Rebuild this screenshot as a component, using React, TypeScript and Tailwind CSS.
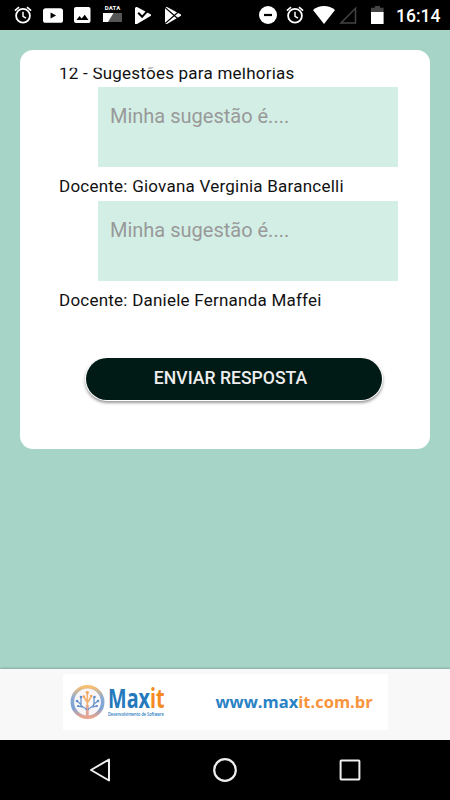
const docentes = ["Giovana Verginia Barancelli", "Daniele Fernanda Maffei"];

function AlarmIcon() {
  return (
    <svg width="18" height="18" viewBox="0 0 18 18" fill="none" stroke="#fff">
      <circle cx="9" cy="9.8" r="6.9" strokeWidth="1.8" />
      <path d="M9 5.8v4.5l3 1.9" strokeWidth="1.5" />
      <path d="M.9 4.6 5 1.2M17.1 4.6 13 1.2" strokeWidth="1.7" />
    </svg>
  );
}

function StatusBar() {
  return (
    <header className="flex h-[30px] items-center bg-black text-white">
      <div className="ml-[14px] flex">
        <AlarmIcon />
      </div>
      <svg className="ml-[11px]" width="20" height="15" viewBox="0 0 19 14">
        <rect width="19" height="14" rx="2.6" fill="#fff" />
        <path d="m7.2 4.1 5.2 2.9-5.2 2.9z" fill="#000" />
      </svg>
      <svg className="ml-[11px]" width="17" height="16" viewBox="0 0 17 16">
        <rect width="16.5" height="16" rx="2" fill="#fff" />
        <path d="m2.5 13 3-4 2.2 2.6 3-3.9 3.8 5.3z" fill="#000" />
      </svg>
      <div className="ml-[12px] flex h-[30px] w-[19px] flex-col items-center">
        <span className="mt-[4px] text-[6px] leading-[7px] font-bold tracking-[0.2px]">DATA</span>
        <svg className="mt-[2px]" width="19" height="9" viewBox="0 0 19 9">
          <path d="M0 0h19v9H0z" fill="#555" />
          <path d="M0 0h10.5L5 9H0z" fill="#fff" />
        </svg>
      </div>
      <svg className="ml-[13px]" width="17" height="17" viewBox="0 0 17 17">
        <path d="M1 0h1l14 7.5v1.3L2 17H0V1z" fill="#fff" />
        <path d="m3.2 5.7 3.9 4.1L14.2 2" fill="none" stroke="#000" strokeWidth="2" />
      </svg>
      <svg className="ml-[13px]" width="17" height="17" viewBox="0 0 17 17">
        <path d="M1 0h1l14 7.5v1.3L2 17H0V1z" fill="#fff" />
        <path d="m0 .5 13 11.2M0 16.5 13 5.2" stroke="#000" strokeWidth="1.2" />
      </svg>
      <svg className="ml-[77px]" width="18" height="18" viewBox="0 0 18 18">
        <circle cx="9" cy="9" r="9" fill="#fff" />
        <path d="M5 9h8" stroke="#000" strokeWidth="2.2" />
      </svg>
      <div className="ml-[9px] flex">
        <AlarmIcon />
      </div>
      <svg className="ml-[9px]" width="22" height="18" viewBox="0 0 22 18">
        <path d="M0 4C6-1.2 16-1.2 22 4L11 18z" fill="#fff" />
      </svg>
      <svg className="ml-[4px]" width="18" height="18" viewBox="0 0 18 18">
        <path d="M2 17 16.5 2.3V17z" fill="none" stroke="#444" strokeWidth="1.5" />
      </svg>
      <svg className="ml-[14px]" width="13" height="18" viewBox="0 0 13 18">
        <path d="M0 1.8h3.8V0h5.2v1.8H12.6V7H0z" fill="#444" />
        <path d="M0 6h12.6v12H0z" fill="#fff" />
      </svg>
      <span className="ml-[12px] pt-px text-[17.5px] leading-[30px] font-medium">16:14</span>
    </header>
  );
}

function MaxitLogo() {
  return (
    <svg width="35" height="36" viewBox="0 0 35 36" fill="none">
      <defs>
        <linearGradient id="ring" x1="0" y1="0" x2="0" y2="1">
          <stop offset="0" stopColor="#f7bf72" />
          <stop offset=".35" stopColor="#8fabd2" />
          <stop offset=".7" stopColor="#7ba3d4" />
          <stop offset="1" stopColor="#eda48d" />
        </linearGradient>
      </defs>
      <circle cx="17.5" cy="18" r="15.2" fill="#f8f6f8" stroke="url(#ring)" strokeWidth="3.6" />
      <path d="M17.3 33V21" stroke="#e0a595" strokeWidth="2.8" />
      <path d="M16.5 26c-1-3-5-2-6-6M18 26c1-3 5-2 6-6M10.5 20 7 17M11 20V13M24 20l4-3M24 20v-7M13 23l-5-1M22 23l5-1" stroke="#6b96cd" strokeWidth="1.3" />
      <path d="M17.3 22V9M17 18l-3-5M18 18l3-5" stroke="#f5b06e" strokeWidth="1.6" />
      <g fill="#5f8fcb">
        <circle cx="7" cy="17" r="1.3" />
        <circle cx="11" cy="13" r="1.3" />
        <circle cx="28" cy="17" r="1.3" />
        <circle cx="24.5" cy="13" r="1.3" />
        <circle cx="8" cy="22" r="1.1" />
        <circle cx="27" cy="22" r="1.1" />
      </g>
      <g fill="#f5a55a">
        <circle cx="17.3" cy="8.5" r="1.6" />
        <circle cx="13.8" cy="12.5" r="1.3" />
        <circle cx="21.2" cy="12" r="1.3" />
      </g>
    </svg>
  );
}

function Banner() {
  return (
    <footer className="flex h-[71px] justify-center bg-[#f8f8f8] pt-[5px] shadow-[0_-1px_2px_rgba(0,0,0,0.2)]">
      <div className="flex h-[56px] w-[325px] bg-white">
        <div className="mt-[10px] ml-[7px]">
          <MaxitLogo />
        </div>
        <div className="mt-[11px] ml-[3px] w-[57px] font-['Open_Sans',sans-serif] whitespace-nowrap text-[#2479bd]">
          <p className="h-[26px] text-[26px] leading-[26px] font-bold">
            <span className="inline-block origin-left scale-x-[0.76]">
              Max<span className="text-[#f58a25]">it</span>
            </span>
          </p>
          <p className="origin-left scale-x-[0.77] text-[5px] leading-[6px] font-semibold">Desenvolvimento de Software</p>
        </div>
        <p className="mt-[16px] ml-[51px] font-['Open_Sans',sans-serif] text-[16.5px] leading-[24px] font-bold whitespace-nowrap text-[#2982c4]">
          www.max<span className="text-[#f7943c]">it.com.br</span>
        </p>
      </div>
    </footer>
  );
}

function NavBar() {
  return (
    <nav className="flex h-[60px] items-center justify-between bg-black px-[87px]">
      <svg width="26" height="26" viewBox="0 0 26 26" fill="none" stroke="#eee" strokeWidth="2" strokeLinejoin="round">
        <path d="M22 2.5v21L4 13z" />
      </svg>
      <svg width="26" height="26" viewBox="0 0 26 26" fill="none" stroke="#eee" strokeWidth="2.2">
        <circle cx="13" cy="13" r="10.8" />
      </svg>
      <svg width="26" height="26" viewBox="0 0 26 26" fill="none" stroke="#eee" strokeWidth="2">
        <rect x="3.6" y="3.6" width="18.8" height="18.8" rx=".6" />
      </svg>
    </nav>
  );
}

export default function App() {
  return (
    <div className="flex h-[800px] w-[450px] flex-col overflow-hidden bg-[#a6d5c7] font-['Roboto',sans-serif]">
      <StatusBar />
      <main className="flex-1 px-5 pt-5">
        <div className="h-[399px] rounded-[13px] bg-white pt-[17px] pl-[39px]">
          {/* scrolled list, the first title is partly hidden */}
          <div className="overflow-hidden [clip-path:inset(0.8px_0_0_0)]">
            <p className="-mt-[5px] h-[25.3px] text-[17px] leading-[22px] tracking-[0.23px] text-[#111]">12 - Sugestões para melhorias</p>
            {docentes.map((nome) => (
              <div key={nome} className="h-[114px]">
                <textarea
                  placeholder="Minha sugestão é...."
                  className="ml-[38.6px] block h-[80px] w-[300px] resize-none bg-[#d3eee5] px-[12.4px] pt-[16.5px] text-[20px] leading-[24px] outline-none placeholder:text-[#999]"
                />
                <p className="pt-[7.7px] text-[17px] leading-[22px] tracking-[0.23px] text-[#111]">Docente: {nome}</p>
              </div>
            ))}
          </div>
          <button className="mt-[42.7px] ml-[27px] h-[42px] w-[296px] rounded-[21px] bg-[#001a15] pr-[7px] pb-[1px] text-[17.6px] font-medium text-[#eee] shadow-[0_0_0_1px_#fff,0_2px_3px_1px_rgba(0,0,0,0.4)]">
            ENVIAR RESPOSTA
          </button>
        </div>
      </main>
      <Banner />
      <NavBar />
    </div>
  );
}
